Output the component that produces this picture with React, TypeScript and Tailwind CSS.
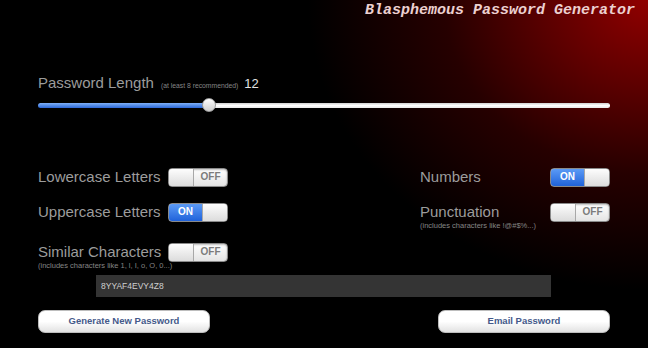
import React from "react";

function Toggle({ on }: { on: boolean }) {
  return (
    <div className="flex h-[19px] w-[60px] overflow-hidden rounded-[4px] border border-[#8a8a8a] bg-gradient-to-b from-[#ffffff] to-[#e4e4e4] shadow-[inset_0_1px_2px_rgba(0,0,0,0.25)]">
      {on ? (
        <>
          <div className="flex w-[33px] items-center justify-center bg-gradient-to-b from-[#5b9af5] to-[#1f62da] text-[10px] font-bold leading-none text-white">
            ON
          </div>
          <div className="flex-1 border-l border-[#a8a8a8] bg-gradient-to-b from-[#fdfdfd] to-[#dcdcdc]" />
        </>
      ) : (
        <>
          <div className="w-[25px] border-r border-[#a8a8a8] bg-gradient-to-b from-[#fdfdfd] to-[#dcdcdc]" />
          <div className="flex flex-1 items-center justify-center text-[10px] font-bold leading-none text-[#7c7c7c]">
            OFF
          </div>
        </>
      )}
    </div>
  );
}

function Option({ label, on, sub }: { label: string; on: boolean; sub?: string }) {
  return (
    <div className="flex w-[190px] flex-col">
      <div className="flex h-[20px] items-center">
        <div className="w-[130px] whitespace-nowrap text-[15px] leading-[20px] text-[#9c9c9c]">{label}</div>
        <Toggle on={on} />
      </div>
      {sub && <div className="h-[8px] whitespace-nowrap text-[7.5px] leading-[8px] text-[#858585]">{sub}</div>}
    </div>
  );
}

export default function App() {
  return (
    <div className="relative h-[348px] w-[648px] overflow-hidden bg-black bg-[radial-gradient(ellipse_340px_290px_at_100%_0%,#900000_0%,#5c0000_30%,#260000_60%,#000000_100%)] font-['Liberation_Sans',Arial,sans-serif]">
      <div className="flex h-[22px] items-center justify-end pr-[13px]">
        <span className="font-['Liberation_Mono','Courier_New',monospace] text-[15px] font-bold italic leading-[22px] text-[#ecd0d0]">
          Blasphemous Password Generator
        </span>
      </div>

      <div className="px-[38px]">
        <div className="mt-[52px] flex h-[18px] items-baseline">
          <span className="text-[15px] leading-[18px] text-[#9c9c9c]">Password Length</span>
          <span className="ml-[7px] text-[6.8px] text-[#858585]">(at least 8 recommended)</span>
          <span className="ml-[6px] text-[13px] text-[#e2e2e2]">12</span>
        </div>

        <div className="relative mt-[6px] flex h-[14px] items-center">
          <div className="flex h-[5px] w-full overflow-hidden rounded-full">
            <div className="w-[170px] bg-gradient-to-b from-[#7fb0f7] to-[#2a66d6]" />
            <div className="flex-1 bg-gradient-to-b from-[#cfcfcf] via-[#ffffff] to-[#e8e8e8]" />
          </div>
          <div className="absolute left-[164px] top-[0px] h-[14px] w-[14px] rounded-full border border-[#9a9a9a] bg-gradient-to-b from-[#ffffff] to-[#cfcfcf]" />
        </div>

        <div className="mt-[55px] flex justify-between">
          <Option label="Lowercase Letters" on={false} />
          <Option label="Numbers" on={true} />
        </div>
        <div className="mt-[15px] flex items-start justify-between">
          <Option label="Uppercase Letters" on={true} />
          <Option label="Punctuation" on={false} sub="(includes characters like !@#$%...)" />
        </div>
        <div className="mt-[12px] flex justify-between">
          <Option label="Similar Characters" on={false} sub="(includes characters like 1, l, I, o, O, 0...)" />
        </div>

        <div className="ml-[58px] mt-[5px] flex h-[22px] w-[455px] items-center bg-[#343434] pl-[5px] text-[8.5px] text-[#d0d0d0]">
          8YYAF4EVY4Z8
        </div>

        <div className="mt-[13px] flex justify-between">
          <button className="flex h-[23px] w-[172px] items-center justify-center rounded-[7px] border border-[#bdbdbd] bg-gradient-to-b from-[#ffffff] via-[#ffffff] to-[#e2e2e2] text-[9.5px] font-bold text-[#44598a]">
            Generate New Password
          </button>
          <button className="flex h-[23px] w-[172px] items-center justify-center rounded-[7px] border border-[#bdbdbd] bg-gradient-to-b from-[#ffffff] via-[#ffffff] to-[#e2e2e2] text-[9.5px] font-bold text-[#44598a]">
            Email Password
          </button>
        </div>
      </div>
    </div>
  );
}
